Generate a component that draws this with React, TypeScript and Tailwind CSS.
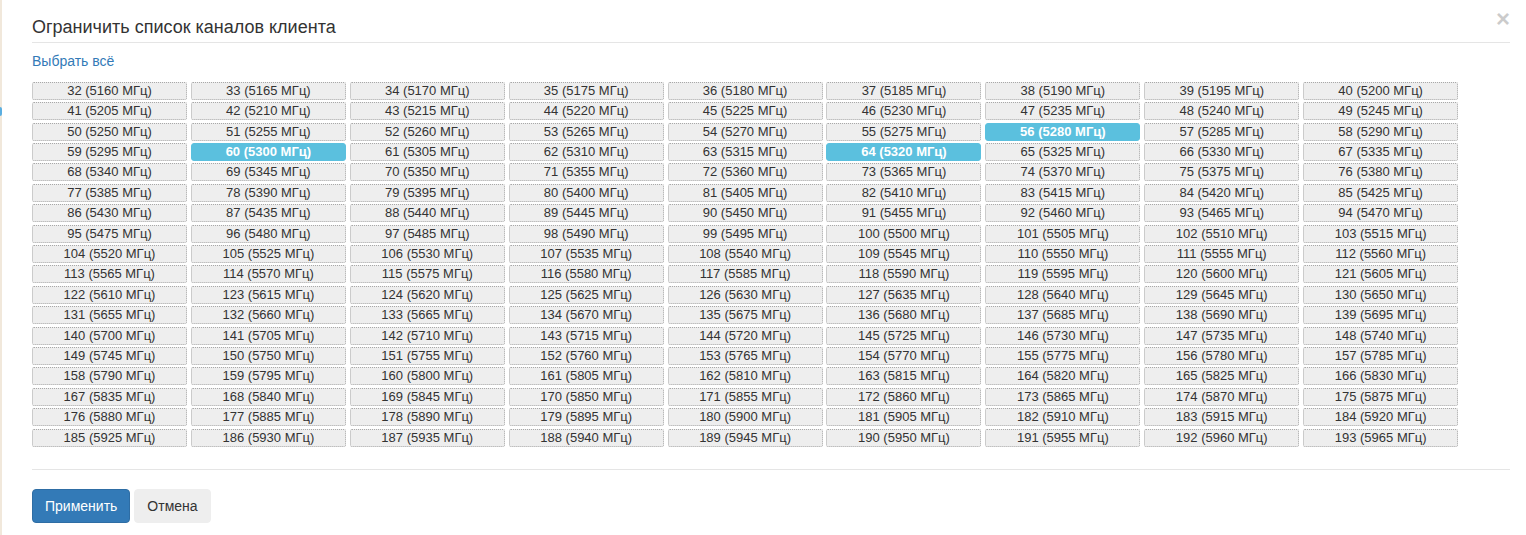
import React from "react";

const selected = new Set([56, 60, 64]);

const channels: { ch: number; f: number }[] = [];
for (let ch = 32; ch <= 193; ch++) {
  channels.push({ ch, f: 5000 + ch * 5 });
}

export default function App() {
  return (
    <div
      className="relative w-full h-[535px] bg-white border-l-2 border-[#f1e8db] text-[#333]"
      style={{ fontFamily: '"Liberation Sans", Arial, sans-serif' }}
    >
      <div className="absolute left-[-2px] top-[107px] w-[2px] h-[9px] bg-[#5aaee0] rounded-r" />
      <div className="pl-[30px] pr-[16px]">
        <div className="relative pt-[15px] pb-[1px] border-b border-[#e5e5e5]">
          <h4 className="text-[18px] leading-[25.7px] font-normal text-[#333]">
            Ограничить список каналов клиента
          </h4>
          <button className="absolute right-[0px] top-[7px] text-[24px] leading-none font-bold text-[#000] opacity-20">
            ×
          </button>
        </div>
        <div className="pt-[8px] text-[14px] leading-[20px]">
          <a className="text-[#337ab7] cursor-pointer">Выбрать всё</a>
        </div>
        <div className="mt-[11px] grid grid-cols-[repeat(9,155px)] gap-x-[3.9px] gap-y-[2.42px]">
          {channels.map(({ ch, f }) => {
            const sel = selected.has(ch);
            return (
              <div
                key={ch}
                className={
                  sel
                    ? "h-[18px] flex items-center justify-center text-[13px] leading-[16px] bg-[#5bc0de] border border-[#5bc0de] rounded-[3px] text-white font-bold"
                    : "h-[18px] flex items-center justify-center text-[13px] leading-[16px] bg-[#eeeeee] border border-dotted border-[#a8a8a8] rounded-[2px] text-[#333]"
                }
              >
                {ch} ({f} МГц)
              </div>
            );
          })}
        </div>
        <div className="mt-[22px] border-t border-[#e5e5e5]" />
        <div className="pt-[19px] flex gap-[4px]">
          <button className="h-[34px] px-[12px] text-[14px] leading-[20px] text-white bg-[#337ab7] border border-[#2e6da4] rounded-[4px]">
            Применить
          </button>
          <button className="h-[34px] px-[12px] text-[14px] leading-[20px] text-[#333] bg-[#eeeeee] border border-[#eeeeee] rounded-[4px]">
            Отмена
          </button>
        </div>
      </div>
    </div>
  );
}
